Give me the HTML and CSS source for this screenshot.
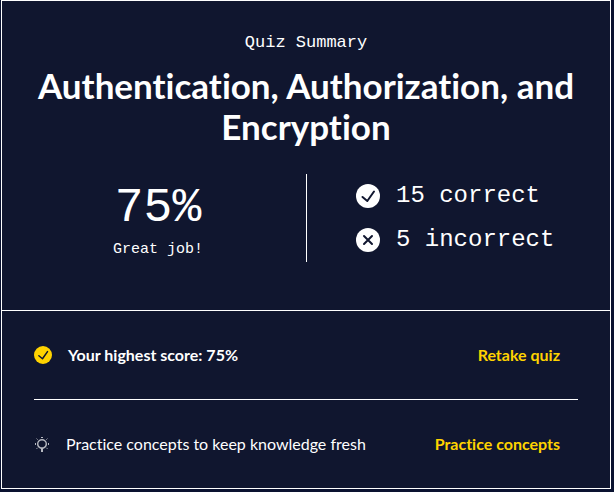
FILE: index.html
```
<!DOCTYPE html>
<html lang="en">
<head>
<meta charset="utf-8">
<meta name="viewport" content="width=device-width, initial-scale=1">
<title>Quiz Summary</title>
<link rel="stylesheet" href="styles.css">
</head>
<body>
<main class="card">
  <header class="summary">
    <p class="eyebrow">Quiz Summary</p>
    <h1 class="title">Authentication, Authorization, and Encryption</h1>
    <div class="stats">
      <div class="score">
        <p class="score-value">75%</p>
        <p class="score-note">Great job!</p>
      </div>
      <ul class="counts">
        <li class="count">
          <svg class="count-icon" viewBox="0 0 24 24" aria-hidden="true">
            <circle cx="12" cy="12" r="12" fill="#fff"/>
            <path d="M6.500 13l4.800 4L18 7.500" fill="none" stroke="#10162f" stroke-width="2" stroke-linecap="round" stroke-linejoin="round"/>
          </svg>
          <span>15 correct</span>
        </li>
        <li class="count">
          <svg class="count-icon" viewBox="0 0 24 24" aria-hidden="true">
            <circle cx="12" cy="12" r="12" fill="#fff"/>
            <path d="M8 8l8 8M16 8l-8 8" fill="none" stroke="#10162f" stroke-width="2" stroke-linecap="round"/>
          </svg>
          <span>5 incorrect</span>
        </li>
      </ul>
    </div>
  </header>
  <section class="actions">
    <div class="action">
      <svg class="badge-icon" viewBox="0 0 24 24" aria-hidden="true">
        <circle cx="12" cy="12" r="12" fill="#ffd300"/>
        <path d="M6.500 13l4.800 4L18 7.500" fill="none" stroke="#10162f" stroke-width="2" stroke-linecap="round" stroke-linejoin="round"/>
      </svg>
      <p class="action-text strong">Your highest score: 75%</p>
      <a class="action-link" href="#retake">Retake quiz</a>
    </div>
    <div class="action">
      <svg class="bulb-icon" viewBox="0 0 16 16" aria-hidden="true">
        <g fill="none" stroke="#b7b9c1">
          <path d="M6.500 12C4.800 11.300 3.700 9.800 3.700 8a4.300 4.300 0 0 1 8.600 0c0 1.800-1.100 3.300-2.800 4z" stroke-width="1.400"/>
          <path d="M8 12v4" stroke-width="2"/>
          <path d="M7 1.500h2M1.500 7v2M14.500 7v2M2.600 2.600l1 1M13.400 2.600l-1 1M2.600 12.800l1-1M13.400 12.800l-1-1"/>
        </g>
      </svg>
      <p class="action-text">Practice concepts to keep knowledge fresh</p>
      <a class="action-link" href="#practice">Practice concepts</a>
    </div>
  </section>
</main>
</body>
</html>
```
FILE: styles.css
```
* {
  box-sizing: border-box;
}

body {
  margin: 0;
  padding: 0 3px 3px 1px;
  background: #0a1230;
  color: #fff;
  font-family: Lato, "Liberation Sans", sans-serif;
  font-size: 16px;
  font-variant-ligatures: none;
  line-height: 24px;
}

h1,
p,
ul {
  margin: 0;
  padding: 0;
}

.card {
  border: 1px solid #fff;
  background: #10162f;
}

.summary {
  padding: 30px 32px 48px;
  border-bottom: 1px solid #fff;
  text-align: center;
}

.eyebrow,
.stats {
  font-family: "Liberation Mono", monospace;
}

.eyebrow {
  font-size: 17px;
}

.title {
  margin-top: 10px;
  font-size: 35px;
  line-height: 41px;
  font-weight: 700;
}

.stats {
  display: grid;
  grid-template-columns: 1fr 1fr;
  margin-top: 27px;
}

.score {
  padding: 4px 24px 0 0;
}

.score-value {
  font-size: 48px;
  line-height: 60px;
}

.score-note {
  font-size: 15px;
  line-height: 24px;
}

.counts {
  display: flex;
  flex-direction: column;
  justify-content: center;
  gap: 20px;
  padding-left: 49px;
  border-left: 1px solid #fff;
  list-style: none;
}

.count {
  display: flex;
  align-items: center;
  gap: 16px;
  font-size: 24px;
  white-space: nowrap;
}

.count-icon {
  flex: none;
  width: 24px;
  height: 24px;
}

.actions {
  padding: 0 32px;
}

.action {
  display: flex;
  align-items: center;
  gap: 16px;
  padding: 32px 18px 32px 0;
}

.action + .action {
  border-top: 1px solid #fff;
}

.badge-icon {
  flex: none;
  width: 18px;
  height: 18px;
}

.bulb-icon {
  flex: none;
  width: 16px;
  height: 16px;
}

.action-text {
  flex: 1;
}

.strong,
.action-link {
  font-weight: 700;
}

.action-link {
  color: #ffd300;
  text-decoration: none;
  white-space: nowrap;
}
```
